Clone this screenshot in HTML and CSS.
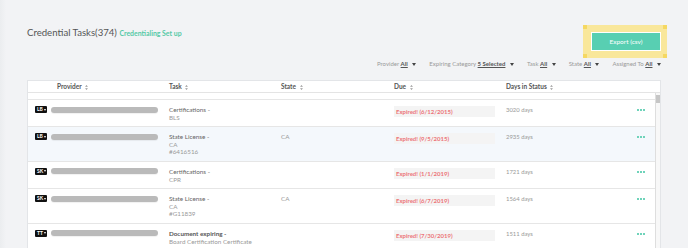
FILE: index.html
```html
<!DOCTYPE html>
<html lang="en">
<head>
  <meta charset="UTF-8">
  <title>Credential Tasks</title>
  <link rel="stylesheet" href="styles.css">
</head>
<body>
  <div class="page">
    <div class="top">
      <h1 class="title">Credential Tasks(374) <a class="setup">Credentialing Set up</a></h1>
      <div class="export-wrap">
        <span class="corner tl"></span><span class="corner tr"></span>
        <span class="corner bl"></span><span class="corner br"></span>
        <button class="export">Export (csv)</button>
      </div>
    </div>

    <div class="filters">
      <span class="filter">Provider <u>All</u> <i class="caret"></i></span>
      <span class="filter">Expiring Category <u>5 Selected</u> <i class="caret"></i></span>
      <span class="filter">Task <u>All</u> <i class="caret"></i></span>
      <span class="filter">State <u>All</u> <i class="caret"></i></span>
      <span class="filter">Assigned To <u>All</u> <i class="caret"></i></span>
    </div>

    <div class="card">
      <div class="thead cols">
        <div class="th first">Provider <svg class="sort" viewBox="0 0 4 7"><path d="M2 0 4 2.5H0zM2 7 4 4.5H0z"/></svg></div>
        <div class="th">Task <svg class="sort" viewBox="0 0 4 7"><path d="M2 0 4 2.5H0zM2 7 4 4.5H0z"/></svg></div>
        <div class="th">State <svg class="sort" viewBox="0 0 4 7"><path d="M2 0 4 2.5H0zM2 7 4 4.5H0z"/></svg></div>
        <div class="th">Due <svg class="sort" viewBox="0 0 4 7"><path d="M2 0 4 2.5H0zM2 7 4 4.5H0z"/></svg></div>
        <div class="th">Days in Status <svg class="sort" viewBox="0 0 4 7"><path d="M2 0 4 2.5H0zM2 7 4 4.5H0z"/></svg></div>
        <div class="th"></div>
      </div>
      <div class="body-wrap">
        <div class="rows">
          <div class="spacer"></div>

          <div class="row cols">
            <div class="td prov"><span class="badge">LB <i></i></span><span class="blur"></span></div>
            <div class="td task"><div class="t-main">Certifications -</div><div>BLS</div></div>
            <div class="td"></div>
            <div class="td"><span class="due">Expired! (6/12/2015)</span></div>
            <div class="td days">3020 days</div>
            <div class="td act"><span class="dots"><b></b><b></b><b></b></span></div>
          </div>

          <div class="row cols hl">
            <div class="td prov"><span class="badge">LB <i></i></span><span class="blur"></span></div>
            <div class="td task"><div class="t-main">State License -</div><div>CA</div><div>#6416516</div></div>
            <div class="td state">CA</div>
            <div class="td"><span class="due">Expired! (9/5/2015)</span></div>
            <div class="td days">2935 days</div>
            <div class="td act"><span class="dots"><b></b><b></b><b></b></span></div>
          </div>

          <div class="row cols">
            <div class="td prov"><span class="badge">SK <i></i></span><span class="blur"></span></div>
            <div class="td task"><div class="t-main">Certifications -</div><div>CPR</div></div>
            <div class="td"></div>
            <div class="td"><span class="due">Expired! (1/1/2019)</span></div>
            <div class="td days">1721 days</div>
            <div class="td act"><span class="dots"><b></b><b></b><b></b></span></div>
          </div>

          <div class="row cols">
            <div class="td prov"><span class="badge">SK <i></i></span><span class="blur"></span></div>
            <div class="td task"><div class="t-main">State License -</div><div>CA</div><div>#G11839</div></div>
            <div class="td state">CA</div>
            <div class="td"><span class="due">Expired! (6/7/2019)</span></div>
            <div class="td days">1564 days</div>
            <div class="td act"><span class="dots"><b></b><b></b><b></b></span></div>
          </div>

          <div class="row cols">
            <div class="td prov"><span class="badge">TT <i></i></span><span class="blur"></span></div>
            <div class="td task"><div class="t-main bold">Document expiring -</div><div>Board Certification Certificate</div></div>
            <div class="td"></div>
            <div class="td"><span class="due">Expired! (7/30/2019)</span></div>
            <div class="td days">1511 days</div>
            <div class="td act"><span class="dots"><b></b><b></b><b></b></span></div>
          </div>
        </div>
        <div class="scroll"><div class="thumb"></div></div>
      </div>
    </div>
  </div>
</body>
</html>
```

FILE: styles.css
```css
html, body {
  margin: 0;
  height: 248px;
  overflow: hidden;
}
body {
  font-family: 'Lato', 'Open Sans', sans-serif;
  background: linear-gradient(to right, #ebedef 0, #f2f3f5 6px);
  color: #555;
}
.page {
  padding: 25px 27px 0 27px;
}
.top {
  display: flex;
  justify-content: space-between;
  align-items: flex-start;
}
.title {
  margin: 1px 0 0;
  font-size: 9.6px;
  line-height: 14px;
  font-weight: 400;
  color: #555;
}
.setup {
  font-size: 6.9px;
  font-weight: 700;
  color: #55c9a6;
}
.export-wrap {
  position: relative;
  margin-right: -6px;
  padding: 7px 6px 7px 8px;
  background: #f9e79b;
}
.corner {
  position: absolute;
  width: 4px;
  height: 4px;
  background: #f5d862;
}
.corner.tl { top: 0; left: 0; }
.corner.tr { top: 0; right: 0; }
.corner.bl { bottom: 0; left: 0; }
.corner.br { bottom: 0; right: 0; }
.export {
  display: block;
  width: 70px;
  height: 19px;
  border: 1px solid #fff;
  background: #58cfb2;
  color: #fff;
  font-family: inherit;
  font-size: 6.5px;
  padding: 0;
}
.filters {
  display: flex;
  justify-content: flex-end;
  gap: 13px;
  margin: 1px 0 0 0;
  font-size: 6px;
  line-height: 10px;
  color: #9a9a9a;
}
.filter u {
  color: #555;
  font-weight: 700;
}
.caret {
  display: inline-block;
  margin-left: 3px;
  vertical-align: middle;
  border-left: 2.5px solid transparent;
  border-right: 2.5px solid transparent;
  border-top: 3px solid #444;
}
.card {
  margin-top: 11px;
  background: #fff;
  border: 1px solid #e3e5e8;
  border-bottom: none;
}
.cols {
  display: grid;
  grid-template-columns: 141px 112px 113px 112px 113px 1fr;
}
.thead {
  height: 11px;
  border-bottom: 1px solid #e4e4e4;
}
.th {
  font-size: 6.5px;
  line-height: 11px;
  font-weight: 700;
  color: #555;
}
.th.first {
  padding-left: 29px;
}
.sort {
  width: 3px;
  height: 5px;
  margin-left: 2px;
  vertical-align: -0.5px;
  fill: #999;
}
.body-wrap {
  display: flex;
}
.rows {
  flex: 1;
}
.spacer {
  height: 6px;
  border-bottom: 1px solid #e6e6e6;
}
.scroll {
  width: 4px;
  border-left: 1px solid #dedede;
  background: #f8f8f8;
  padding-top: 2px;
}
.thumb {
  height: 8px;
  background: #c6c6c6;
}
.row {
  border-bottom: 1px solid #e6e6e6;
}
.row.hl {
  background: #f4f8fc;
}
.td {
  padding: 6px 0 5px;
  font-size: 6.3px;
  line-height: 7.6px;
  color: #9a9a9a;
}
.prov {
  display: flex;
  align-items: flex-start;
  gap: 4px;
  padding-left: 7px;
  padding-top: 6px;
}
.badge {
  display: inline-flex;
  align-items: center;
  gap: 1px;
  height: 7px;
  padding: 0 1px 0 2px;
  background: #111;
  border-radius: 1px;
  color: #fff;
  font-size: 5px;
  line-height: 7px;
  font-weight: 700;
}
.badge i {
  border-left: 1.5px solid transparent;
  border-right: 1.5px solid transparent;
  border-top: 2px solid #fff;
}
.blur {
  width: 107px;
  height: 6px;
  margin-top: 0.5px;
  border-radius: 3px;
  background: #bababa;
  box-shadow: 0 1px 1px rgba(0,0,0,0.06);
  filter: blur(0.4px);
}
.t-main {
  color: #666;
}
.t-main.bold {
  color: #555;
  font-weight: 700;
}
.state {
  color: #999;
}
.due {
  display: block;
  width: 99px;
  height: 11px;
  padding-left: 2px;
  background: #f4f4f4;
  color: #ec7478;
  font-size: 6px;
  font-weight: 700;
  line-height: 11px;
}
.days {
  color: #999;
  font-size: 5.9px;
}
.act {
  padding-left: 18px;
}
.dots {
  display: flex;
  gap: 1px;
  margin-top: 3px;
}
.dots b {
  width: 2px;
  height: 2px;
  background: #6fd3ba;
}
```
